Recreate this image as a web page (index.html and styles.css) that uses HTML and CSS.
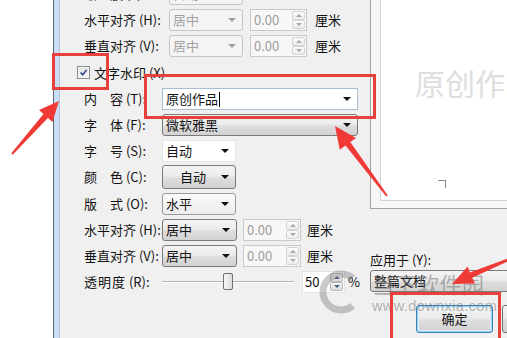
FILE: index.html
```html
<!DOCTYPE html>
<html lang="zh-CN">
<head>
    <meta charset="UTF-8">
    <title>水印</title>
    <link rel="stylesheet" href="styles.css">
</head>
<body>
    <div class="screen">
        <div class="desk"></div>
        <div class="edge"></div>

        <!-- Watermark dialog -->
        <div class="dialog">
            <div class="form">
                <!-- picture watermark options (scrolled past the top) -->
                <div class="row row-pic">
                    <span class="label">缩　放 (L):</span>
                    <div class="combo off"><span>自动</span><i class="caret"></i></div>
                </div>
                <div class="row row-pic">
                    <span class="label">水平对齐 (H):</span>
                    <div class="combo off"><span>居中</span><i class="caret"></i></div>
                    <div class="spin off"><span class="spin-val">0.00</span><span class="spin-btns"><i class="up"></i><i class="down"></i></span></div>
                    <span class="unit">厘米</span>
                </div>
                <div class="row row-pic">
                    <span class="label">垂直对齐 (V):</span>
                    <div class="combo off"><span>居中</span><i class="caret"></i></div>
                    <div class="spin off"><span class="spin-val">0.00</span><span class="spin-btns"><i class="up"></i><i class="down"></i></span></div>
                    <span class="unit">厘米</span>
                </div>

                <!-- text watermark options -->
                <div class="row check-row">
                    <span class="check">
                        <svg viewBox="0 0 13 13" aria-hidden="true"><path d="M3 6.5 L5.6 9.2 L10.2 3.4" fill="none" stroke="#283f86" stroke-width="1.8"/></svg>
                    </span>
                    <span>文字水印 (X)</span>
                </div>
                <div class="row">
                    <span class="label">内　容 (T):</span>
                    <div class="combo field wide"><span>原创作品<i class="cursor"></i></span><i class="caret"></i></div>
                </div>
                <div class="row">
                    <span class="label">字　体 (F):</span>
                    <div class="combo wide"><span>微软雅黑</span><i class="caret"></i></div>
                </div>
                <div class="row">
                    <span class="label">字　号 (S):</span>
                    <div class="combo field plain"><span>自动</span><i class="caret"></i></div>
                </div>
                <div class="row">
                    <span class="label">颜　色 (C):</span>
                    <div class="combo tall"><span class="centered">自动</span><i class="caret"></i></div>
                </div>
                <div class="row">
                    <span class="label">版　式 (O):</span>
                    <div class="combo light"><span>水平</span><i class="caret"></i></div>
                </div>
                <div class="row">
                    <span class="label">水平对齐 (H):</span>
                    <div class="combo"><span>居中</span><i class="caret"></i></div>
                    <div class="spin off"><span class="spin-val">0.00</span><span class="spin-btns"><i class="up"></i><i class="down"></i></span></div>
                    <span class="unit">厘米</span>
                </div>
                <div class="row">
                    <span class="label">垂直对齐 (V):</span>
                    <div class="combo"><span>居中</span><i class="caret"></i></div>
                    <div class="spin off"><span class="spin-val">0.00</span><span class="spin-btns"><i class="up"></i><i class="down"></i></span></div>
                    <span class="unit">厘米</span>
                </div>
                <div class="row">
                    <span class="label"><span class="spread">透明度</span> (R):</span>
                    <div class="slider">
                        <span class="track"></span>
                        <span class="thumb"></span>
                    </div>
                    <div class="spin pct"><span class="spin-val">50</span><span class="spin-btns"><i class="up"></i><i class="down"></i></span></div>
                    <span class="unit pct-sign">%</span>
                </div>
            </div>

            <div class="side">
                <div class="preview">
                    <div class="page">
                        <p class="page-mark">原创作品</p>
                        <i class="crop"></i>
                    </div>
                </div>
                <p class="apply-label">应用于 (Y):</p>
                <div class="combo apply"><span>整篇文档</span></div>
                <div class="buttons">
                    <button class="btn btn-default">确定</button>
                    <button class="btn">取消</button>
                </div>
            </div>
        </div>

        <!-- site watermark -->
        <div class="logo">
            <svg class="logo-ring" viewBox="0 0 50 56" aria-hidden="true">
                <path d="M36.6 16.2 A18 18 0 1 0 36.6 43.8" fill="none" stroke="rgba(120,120,120,0.4)" stroke-width="7"/>
            </svg>
            <div class="logo-text">
                <p class="logo-name">当下软件园</p>
                <p class="logo-url">www.downxia.com</p>
            </div>
        </div>

        <!-- red annotations -->
        <div class="red-box box-check"></div>
        <div class="red-box box-content"></div>
        <div class="red-box box-ok"></div>
        <svg class="arrows" viewBox="0 0 507 338" aria-hidden="true">
            <polygon points="59,101 52.4,122 47.9,118 12.7,154.7 11.3,153.3 43.5,114 39,110"/>
            <polygon points="335,126 356,138 350.3,142 387.8,195.4 386.2,196.6 345.5,145.6 339.8,149.7"/>
            <polygon points="452,284 467.7,266.6 469.8,272.4 509.6,257.8 510.4,260.2 472.2,277.8 475,283.6"/>
        </svg>
    </div>
</body>
</html>
```

FILE: styles.css
```css
/* Reset and base styles */
* {
    margin: 0;
    padding: 0;
    box-sizing: border-box;
}

body {
    font-family: "Noto Sans CJK SC", "Noto Sans", sans-serif;
    font-size: 13px;
    line-height: 16px;
    color: #111;
    background: #fff;
    overflow: hidden;
}

.screen {
    position: relative;
    display: flex;
    width: 507px;
    height: 338px;
    overflow: hidden;
}

/* Window edge on the left */
.desk {
    width: 53px;
    flex-shrink: 0;
    background: #fff;
}

.edge {
    width: 7px;
    flex-shrink: 0;
    background: #c9ddf4;
    border-left: 1px solid #5d6670;
    border-right: 1px solid #b3c6dc;
}

.dialog {
    flex: 1;
    display: flex;
    background: #f0f0f0;
}

/* Form column */
.form {
    width: 310px;
    flex-shrink: 0;
    margin-top: -19px;
    padding-left: 24px;
}

.row {
    display: flex;
    align-items: center;
    height: 26.2px;
    white-space: nowrap;
}

.label {
    width: 78px;
    flex-shrink: 0;
}

.row-pic .label {
    width: 85px;
}

.spread {
    letter-spacing: 1px;
}

.unit {
    margin-left: 6px;
}

.row-pic .unit {
    margin-left: 8px;
}

/* Checkbox */
.check-row {
    margin-left: -7px;
    gap: 4px;
}

.check {
    width: 13px;
    height: 13px;
    border: 1px solid #8e8f8f;
    background: linear-gradient(#dedede, #fbfbfb);
    box-shadow: inset 0 0 0 1px #f4f4f4;
    display: flex;
}

.check svg {
    width: 11px;
    height: 11px;
}

/* Combo boxes */
.combo {
    display: flex;
    align-items: center;
    justify-content: space-between;
    width: 75px;
    height: 22px;
    padding: 0 6px 0 3px;
    border: 1px solid #7a7a7a;
    border-radius: 3px;
    background: linear-gradient(#f4f4f4, #ececec 45%, #dedede 55%, #d2d2d2);
}

.row-pic .combo {
    width: 74px;
}

.combo.off {
    border-color: #c4c4c4;
    background: #f4f4f4;
    color: #a2a2a2;
}

.combo.off .caret {
    border-top-color: #9c9c9c;
}

.combo.field {
    border-radius: 0;
    background: #fff;
    border-color: #a9bdd6;
}

.combo.plain {
    border-color: #e4e4e4;
    width: 74px;
}

.combo.wide {
    width: 196px;
}

.combo.tall {
    height: 24px;
    width: 74px;
}

.combo.light {
    width: 74px;
    border-color: #9a9a9a;
    background: linear-gradient(#fbfbfb, #ececec);
}

.centered {
    margin-left: 14px;
}

.caret {
    width: 0;
    height: 0;
    border-left: 4px solid transparent;
    border-right: 4px solid transparent;
    border-top: 4px solid #111;
}

.cursor {
    display: inline-block;
    width: 1px;
    height: 15px;
    margin-left: 1px;
    background: #000;
    vertical-align: -3px;
}

/* Spin boxes */
.spin {
    display: flex;
    align-items: stretch;
    width: 58px;
    height: 22px;
    margin-left: 6px;
    border: 1px solid #c9c9c9;
    background: #f7f7f7;
}

.row-pic .spin {
    width: 57px;
    margin-left: 7px;
}

.spin-val {
    flex: 1;
    padding-left: 3px;
    line-height: 20px;
}

.spin.off .spin-val {
    color: #9c9c9c;
}

.spin-btns {
    display: flex;
    flex-direction: column;
    width: 13px;
    margin: 1px 1px 1px 0;
}

.spin-btns i {
    flex: 1;
    display: flex;
    align-items: center;
    justify-content: center;
    border: 1px solid #d4d4d4;
    border-radius: 2px;
    background: linear-gradient(#fbfbfb, #ececec);
}

.spin-btns .up::after,
.spin-btns .down::after {
    content: '';
    border-left: 3px solid transparent;
    border-right: 3px solid transparent;
}

.spin-btns .up::after {
    border-bottom: 3px solid #a8a8a8;
}

.spin-btns .down::after {
    border-top: 3px solid #a8a8a8;
}

.spin.pct {
    width: 43px;
    margin-left: 8px;
    background: #fff;
    border-color: #e4e4e4;
}

.spin.pct .spin-val {
    padding-left: 2px;
}

.spin.pct .spin-btns i {
    border-color: #b8b8b8;
    background: linear-gradient(#f6f6f6, #dcdcdc);
}

.spin.pct .up::after {
    border-bottom-color: #4a5b8c;
}

.spin.pct .down::after {
    border-top-color: #4a5b8c;
}

.pct-sign {
    margin-left: 3px;
}

/* Transparency slider */
.slider {
    position: relative;
    display: flex;
    align-items: center;
    width: 132px;
    height: 18px;
}

.track {
    flex: 1;
    height: 2px;
    border-top: 1px solid #b4b4b4;
    border-bottom: 1px solid #fff;
}

.thumb {
    position: absolute;
    left: 61px;
    top: 0;
    width: 10px;
    height: 17px;
    border: 1px solid #707070;
    border-radius: 2px;
    background: linear-gradient(90deg, #f7f7f7, #dcdcdc);
}

/* Right column */
.side {
    flex: 1;
    overflow: hidden;
}

.preview {
    display: flex;
    height: 209px;
    padding: 0 0 7px 9px;
    border-left: 1px solid #a3a3a3;
    border-bottom: 1px solid #a3a3a3;
    background: #f6f6f6;
}

.page {
    flex: 1;
    padding: 66px 0 0 34px;
    background: #fff;
    border-left: 1px solid #d2d2d2;
    border-bottom: 1px solid #d2d2d2;
}

.page-mark {
    font-size: 30px;
    line-height: 32px;
    color: #dedede;
    white-space: nowrap;
}

.crop {
    display: block;
    width: 8px;
    height: 8px;
    margin: 82px 0 0 23px;
    border-top: 1px solid #8a8a8a;
    border-right: 1px solid #8a8a8a;
}

.apply-label {
    margin-top: 43px;
}

.combo.apply {
    width: 160px;
    margin-top: 2px;
}

.buttons {
    display: flex;
    gap: 9px;
    margin: 13px 0 0 46px;
}

.btn {
    flex-shrink: 0;
    width: 77px;
    height: 28px;
    font: inherit;
    color: #111;
    border: 1px solid #707070;
    border-radius: 3px;
    background: linear-gradient(#f4f4f4, #ececec 45%, #dedede 55%, #d2d2d2);
}

.btn-default {
    border-color: #3c7fb1;
    box-shadow: inset 0 0 0 1px #9ed6f6, inset 0 0 0 2px #d6eefb;
}

/* Site watermark */
.logo {
    position: absolute;
    left: 316px;
    top: 262px;
    display: flex;
    pointer-events: none;
}

.logo-ring {
    width: 50px;
    height: 56px;
}

.logo-text {
    margin: 8px 0 0 6px;
    color: rgba(120, 120, 120, 0.55);
}

.logo-name {
    font-size: 22px;
    line-height: 26px;
    letter-spacing: 0.5px;
}

.logo-url {
    margin-top: 1px;
    font-family: "Liberation Sans", Arial, sans-serif;
    font-size: 14.5px;
    line-height: 18px;
    letter-spacing: 0.4px;
}

/* Red annotations */
.red-box {
    position: absolute;
    border: 3px solid #e8403d;
}

.box-check {
    left: 52px;
    top: 53px;
    width: 57px;
    height: 37px;
}

.box-content {
    left: 144px;
    top: 74px;
    width: 232px;
    height: 45px;
}

.box-ok {
    left: 390px;
    top: 292px;
    width: 111px;
    height: 60px;
}

.arrows {
    position: absolute;
    left: 0;
    top: 0;
    width: 507px;
    height: 338px;
    fill: #ef3a35;
}
```
